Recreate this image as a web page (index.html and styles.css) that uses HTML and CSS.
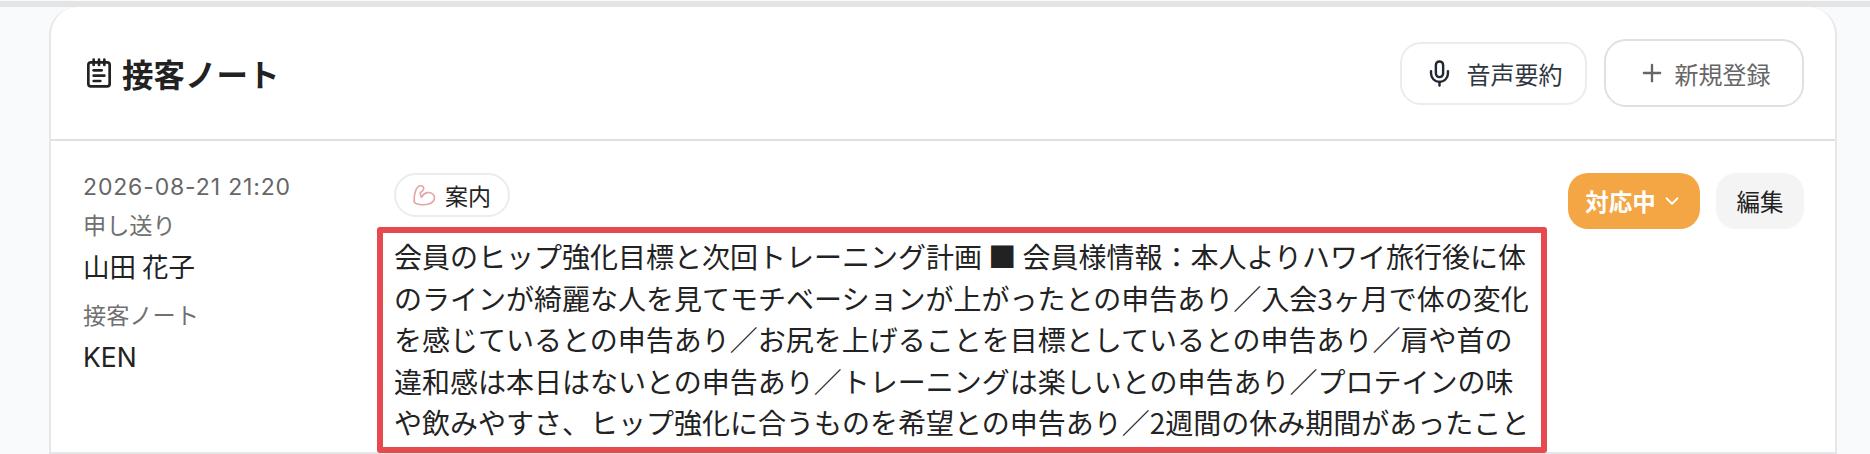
FILE: index.html
```html
<!DOCTYPE html>
<html lang="ja">
<head>
    <meta charset="UTF-8">
    <title>接客ノート</title>
    <link rel="stylesheet" href="styles.css">
</head>
<body>
    <div class="topbar"></div>
    <div class="page">
        <section class="card">
            <header class="card-header">
                <h2 class="card-title">
                    <svg class="icon-note" viewBox="0 0 24 24" fill="none" stroke="currentColor" stroke-width="2" stroke-linecap="round" stroke-linejoin="round">
                        <path d="M8 2v4"/><path d="M12 2v4"/><path d="M16 2v4"/>
                        <rect width="16" height="18" x="4" y="4" rx="2"/>
                        <path d="M8 10h6"/><path d="M8 14h8"/><path d="M8 18h5"/>
                    </svg>
                    接客ノート
                </h2>
                <div class="header-actions">
                    <button class="btn btn-voice">
                        <svg class="icon-mic" viewBox="0 0 24 24" fill="none" stroke="currentColor" stroke-width="2" stroke-linecap="round" stroke-linejoin="round">
                            <path d="M12 2a3 3 0 0 0-3 3v7a3 3 0 0 0 6 0V5a3 3 0 0 0-3-3Z"/>
                            <path d="M19 10v2a7 7 0 0 1-14 0v-2"/>
                            <path d="M12 19v3"/>
                        </svg>
                        音声要約
                    </button>
                    <button class="btn btn-new">
                        <svg class="icon-plus" viewBox="0 0 24 24" fill="none" stroke="currentColor" stroke-width="2" stroke-linecap="round">
                            <path d="M5 12h14"/><path d="M12 5v14"/>
                        </svg>
                        新規登録
                    </button>
                </div>
            </header>

            <div class="note">
                <div class="note-meta">
                    <div class="note-date">2026-08-21 21:20</div>
                    <div class="meta-label label-first">申し送り</div>
                    <div class="meta-value">山田 花子</div>
                    <div class="meta-label label-second">接客ノート</div>
                    <div class="meta-value value-second">KEN</div>
                </div>
                <div class="note-main">
                    <span class="tag">
                        <svg class="icon-arm" viewBox="0 0 24 24" fill="none" stroke="currentColor" stroke-width="1.7" stroke-linecap="round" stroke-linejoin="round">
                            <path d="M1.500 18c-.6-3.500 0-7.500 1.200-10.800C3.700 4.300 5.800 1.800 8 1.800c2.300 0 3.600 1.800 3 3.800-.5 1.700-2 2.700-3.400 3.200-.1 1.800.3 3.500 1.200 5 1.200-2 3.200-4.300 6.200-4.800 3.300-.5 6.800 1.200 7.300 4.300.4 3.200-1.800 6-5 7.200-3 1.100-6.800 1.400-10.300.9-2.700-.4-5.400-1-6-3.400Z"/>
                        </svg>
                        案内
                    </span>
                    <div class="note-body">会員のヒップ強化目標と次回トレーニング計画 ■ 会員様情報：本人よりハワイ旅行後に体のラインが綺麗な人を見てモチベーションが上がったとの申告あり／入会3ヶ月で体の変化を感じているとの申告あり／お尻を上げることを目標としているとの申告あり／肩や首の違和感は本日はないとの申告あり／トレーニングは楽しいとの申告あり／プロテインの味や飲みやすさ、ヒップ強化に合うものを希望との申告あり／2週間の休み期間があったこと</div>
                </div>
                <div class="note-actions">
                    <button class="btn-status">
                        対応中
                        <svg class="icon-chevron" viewBox="0 0 24 24" fill="none" stroke="currentColor" stroke-width="2" stroke-linecap="round" stroke-linejoin="round">
                            <path d="m6 9 6 6 6-6"/>
                        </svg>
                    </button>
                    <button class="btn-edit">編集</button>
                </div>
            </div>
        </section>
    </div>
</body>
</html>
```

FILE: styles.css
```css
html, body {
    height: 454px;
    overflow: hidden;
}

body {
    margin: 0;
    background-color: #f9fafc;
    font-family: "Noto Sans CJK JP", Inter, sans-serif;
    color: #222222;
}

.topbar {
    height: 6px;
    margin-top: 1px;
    background: #e4e4e7;
}

.page {
    padding-left: 49px;
}

.card {
    width: 1788px;
    box-sizing: border-box;
    height: 447px;
    background: #ffffff;
    border: 2px solid #e5e7eb;
    border-top: none;
    border-radius: 28px 28px 0 0;
}

.card-header {
    display: flex;
    justify-content: space-between;
    align-items: center;
    box-sizing: border-box;
    height: 134px;
    padding: 0 31px 0 34px;
    border-bottom: 2px solid #e0e0e3;
}

.card-title {
    display: flex;
    align-items: center;
    gap: 7px;
    margin: 0;
    font-size: 31.500px;
    font-weight: 700;
    line-height: 40px;
}

.icon-note {
    width: 32px;
    height: 32px;
    margin-left: -2px;
}

.header-actions {
    display: flex;
    align-items: center;
    gap: 17px;
}

.btn {
    display: flex;
    align-items: center;
    justify-content: center;
    box-sizing: border-box;
    font-family: inherit;
    font-size: 24px;
    background: #ffffff;
    cursor: pointer;
}

.btn-voice {
    width: 187px;
    height: 63px;
    gap: 13px;
    border: 2px solid #ebecf0;
    border-radius: 21px;
    color: #2f3640;
}

.icon-mic {
    width: 29px;
    height: 29px;
    color: #1f2933;
}

.btn-new {
    width: 200px;
    height: 68px;
    gap: 9px;
    border: 2px solid #e0e0e0;
    border-radius: 22px;
    color: #666666;
}

.icon-plus {
    width: 28px;
    height: 28px;
}

.note {
    display: flex;
    padding: 32px 31px 0 32px;
}

.note-meta {
    width: 294px;
    flex: none;
    margin-top: -2px;
}

.note-date {
    font-family: Inter, sans-serif;
    font-size: 23px;
    letter-spacing: 0.85px;
    line-height: 32px;
    color: #666666;
}

.meta-label {
    font-size: 23.200px;
    line-height: 32px;
    color: #707070;
}

.label-first {
    margin-top: 5px;
}

.label-second {
    margin-top: 14px;
}

.meta-value {
    margin-top: 8px;
    font-size: 26.500px;
    line-height: 36px;
    color: #222222;
}

.value-second {
    font-family: Inter, sans-serif;
    margin-top: 9px;
}

.note-main {
    width: 1170px;
    flex: none;
}

.tag {
    display: inline-flex;
    align-items: center;
    gap: 9px;
    box-sizing: border-box;
    height: 44px;
    margin-left: 17px;
    padding: 0 17px;
    border: 2px solid #ebebf0;
    border-radius: 22px;
    font-size: 23px;
}

.icon-arm {
    width: 23px;
    height: 23px;
    color: #e3a5a5;
}

.note-body {
    box-sizing: border-box;
    height: 226px;
    margin-top: 10px;
    padding: 3px 5px 0 11px;
    overflow: hidden;
    border: 6px solid #e64a4f;
    border-radius: 3px;
    font-size: 28px;
    line-height: 41.600px;
    color: #222222;
}

.note-actions {
    display: flex;
    gap: 16px;
    margin-left: auto;
}

.btn-status,
.btn-edit {
    display: flex;
    align-items: center;
    justify-content: center;
    height: 56px;
    box-sizing: border-box;
    border: none;
    border-radius: 20px;
    font-family: inherit;
    font-size: 23.500px;
    cursor: pointer;
}

.btn-status {
    width: 132px;
    gap: 5px;
    background: #f3a643;
    color: #ffffff;
    font-weight: 700;
}

.icon-chevron {
    width: 22px;
    height: 22px;
}

.btn-edit {
    width: 88px;
    background: #f4f4f5;
    color: #222222;
}
```
